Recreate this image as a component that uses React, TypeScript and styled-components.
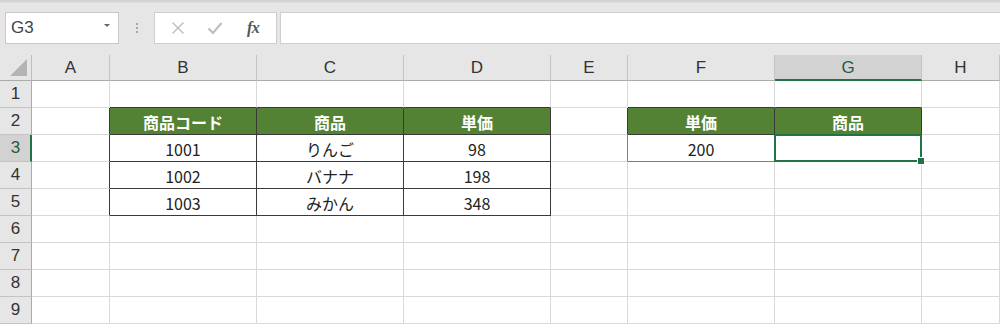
import React from "react";
import styled, { createGlobalStyle, css } from "styled-components";

const GREEN = "#217346";
const GRID = "#d9d9d9";
const EDGE = "#3a3a3a";
const SOFT_EDGE = "#7c7c7c";

const GlobalStyle = createGlobalStyle`
    html, body {
        margin: 0;
        padding: 0;
        background: #e6e6e6;
        overflow: hidden;
    }
    * {
        box-sizing: border-box;
    }
`;

const columns = [
    { key: "A", width: 78 },
    { key: "B", width: 147 },
    { key: "C", width: 147 },
    { key: "D", width: 147 },
    { key: "E", width: 77 },
    { key: "F", width: 147 },
    { key: "G", width: 147 },
    { key: "H", width: 78 },
];

type CellData = { text?: string; head?: boolean; soft?: boolean };

// 表の中身 (行番号 -> 列 -> 値)
const sheet: Record<number, Record<string, CellData>> = {
    2: {
        B: { text: "商品コード", head: true },
        C: { text: "商品", head: true },
        D: { text: "単価", head: true },
        F: { text: "単価", head: true },
        G: { text: "商品", head: true },
    },
    3: { B: { text: "1001" }, C: { text: "りんご" }, D: { text: "98" }, F: { text: "200", soft: true }, G: { soft: true } },
    4: { B: { text: "1002" }, C: { text: "バナナ" }, D: { text: "198" } },
    5: { B: { text: "1003" }, C: { text: "みかん" }, D: { text: "348" } },
};

const selected = { col: "G", row: 3 };

const edgeOf = (col: string | undefined, row: number) => {
    if (!col) return undefined;
    const data = sheet[row]?.[col];
    if (!data) return undefined;
    return data.soft ? SOFT_EDGE : EDGE;
};

const Page = styled.div`
    width: 1000px;
    height: 324px;
    display: flex;
    flex-direction: column;
    background: #e6e6e6;
    font-family: "Noto Sans CJK JP", "Noto Sans", sans-serif;
`;

const TopStrip = styled.div`
    height: 3px;
    background: linear-gradient(#cfcfcf, #dedede);
`;

const FormulaBar = styled.div`
    height: 52px;
    display: flex;
    align-items: flex-start;
    padding: 9px 0 0 5px;
`;

const NameBox = styled.div`
    width: 114px;
    height: 32px;
    background: #ffffff;
    border: 1px solid #c8c8c8;
    display: flex;
    align-items: center;
    justify-content: space-between;
    padding: 0 8px 0 5px;
    font-family: "Liberation Sans", Arial, sans-serif;
    font-size: 17px;
    color: #444;
`;

const DropArrow = styled.span`
    width: 0;
    height: 0;
    border-left: 3px solid transparent;
    border-right: 3px solid transparent;
    border-top: 3px solid #666;
    margin-top: -6px;
`;

const Grip = styled.div`
    width: 35px;
    height: 32px;
    display: flex;
    flex-direction: column;
    align-items: center;
    justify-content: center;
    gap: 2px;

    span {
        width: 2px;
        height: 2px;
        background: #a8a8a8;
    }
`;

const ButtonGroup = styled.div`
    width: 123px;
    height: 32px;
    background: #ffffff;
    border: 1px solid #cfcfcf;
    display: flex;
    align-items: center;
    justify-content: space-around;
    padding: 0 4px;
    margin-right: 3px;
`;

const IconButton = styled.span`
    width: 30px;
    display: flex;
    align-items: center;
    justify-content: center;
`;

const Fx = styled.span`
    font-family: "Liberation Serif", "DejaVu Serif", serif;
    font-style: italic;
    font-weight: 700;
    font-size: 16px;
    color: #555;
    letter-spacing: -0.5px;
`;

const FormulaInput = styled.div`
    flex: 1;
    height: 32px;
    background: #ffffff;
    border: 1px solid #cfcfcf;
    border-right: none;
`;

const Grid = styled.div`
    display: grid;
    grid-template-columns: 32px ${columns.map((c) => `${c.width}px`).join(" ")};
    grid-template-rows: 26px repeat(9, 27px);
    background: #ffffff;
`;

const Corner = styled.div`
    background: #e6e6e6;
    border-right: 1px solid #bdbdbd;
    border-bottom: 1px solid #ababab;
    position: relative;

    &::after {
        content: "";
        position: absolute;
        right: 4px;
        bottom: 4px;
        width: 0;
        height: 0;
        border-left: 17px solid transparent;
        border-bottom: 17px solid #b4b4b4;
    }
`;

const ColHead = styled.div<{ $active: boolean }>`
    background: ${(p) => (p.$active ? "#d2d2d2" : "#e6e6e6")};
    border-right: 1px solid #c4c4c4;
    border-bottom: ${(p) => (p.$active ? `2px solid ${GREEN}` : "1px solid #ababab")};
    display: flex;
    align-items: center;
    justify-content: center;
    padding-top: ${(p) => (p.$active ? "1px" : "0")};
    font-family: "Liberation Sans", Arial, sans-serif;
    font-size: 17px;
    color: ${(p) => (p.$active ? "#1e5e3a" : "#333")};
`;

const RowHead = styled.div<{ $active: boolean }>`
    background: ${(p) => (p.$active ? "#d2d2d2" : "#e6e6e6")};
    border-right: ${(p) => (p.$active ? `2px solid ${GREEN}` : "1px solid #ababab")};
    border-bottom: 1px solid #c4c4c4;
    display: flex;
    align-items: center;
    justify-content: center;
    padding-left: ${(p) => (p.$active ? "1px" : "0")};
    font-family: "Liberation Sans", Arial, sans-serif;
    font-size: 17px;
    color: ${(p) => (p.$active ? "#1e5e3a" : "#333")};
`;

interface CellProps {
    $head?: boolean;
    $right?: string;
    $bottom?: string;
    $selected?: boolean;
}

const Cell = styled.div<CellProps>`
    position: relative;
    border-right: 1px solid ${(p) => p.$right ?? GRID};
    border-bottom: 1px solid ${(p) => p.$bottom ?? GRID};
    display: flex;
    align-items: center;
    justify-content: center;
    padding-top: 1px;
    font-size: 16px;
    color: #222;
    white-space: nowrap;

    ${(p) =>
        p.$head &&
        css`
            background: #548235;
            color: #ffffff;
            font-weight: 700;
        `}

    ${(p) =>
        p.$selected &&
        css`
            &::after {
                content: "";
                position: absolute;
                left: -1px;
                top: -1px;
                right: -1px;
                bottom: -1px;
                border: 2px solid ${GREEN};
            }
            &::before {
                content: "";
                position: absolute;
                right: -4px;
                bottom: -4px;
                width: 6px;
                height: 6px;
                background: ${GREEN};
                border: 1px solid #ffffff;
                z-index: 1;
            }
        `}
`;

const CrossIcon = () => (
    <svg width="14" height="14" viewBox="0 0 14 14">
        <path d="M1.5 1.5 L12.5 12.5 M12.5 1.5 L1.5 12.5" stroke="#bcbcbc" strokeWidth="1.4" fill="none" />
    </svg>
);

const CheckIcon = () => (
    <svg width="16" height="14" viewBox="0 0 16 14">
        <path d="M1.5 7.5 L6 12 L14.5 2" stroke="#bcbcbc" strokeWidth="2" fill="none" />
    </svg>
);

const rows = [1, 2, 3, 4, 5, 6, 7, 8, 9];

const App = () => {
    return (
        <Page>
            <GlobalStyle />
            <TopStrip />
            <FormulaBar>
                <NameBox>
                    <span>G3</span>
                    <DropArrow />
                </NameBox>
                <Grip>
                    <span />
                    <span />
                    <span />
                </Grip>
                <ButtonGroup>
                    <IconButton>
                        <CrossIcon />
                    </IconButton>
                    <IconButton>
                        <CheckIcon />
                    </IconButton>
                    <IconButton>
                        <Fx>fx</Fx>
                    </IconButton>
                </ButtonGroup>
                <FormulaInput />
            </FormulaBar>

            <Grid>
                <Corner />
                {columns.map((c) => (
                    <ColHead key={c.key} $active={c.key === selected.col}>
                        {c.key}
                    </ColHead>
                ))}

                {rows.map((r) => (
                    <React.Fragment key={r}>
                        <RowHead $active={r === selected.row}>{r}</RowHead>
                        {columns.map((c, i) => {
                            const data = sheet[r]?.[c.key];
                            const own = edgeOf(c.key, r);
                            const right = own ?? edgeOf(columns[i + 1]?.key, r);
                            const bottom = own ?? edgeOf(c.key, r + 1);
                            return (
                                <Cell
                                    key={c.key}
                                    $head={data?.head}
                                    $right={right}
                                    $bottom={bottom}
                                    $selected={c.key === selected.col && r === selected.row}
                                >
                                    {data?.text}
                                </Cell>
                            );
                        })}
                    </React.Fragment>
                ))}
            </Grid>
        </Page>
    );
};

export default App;
